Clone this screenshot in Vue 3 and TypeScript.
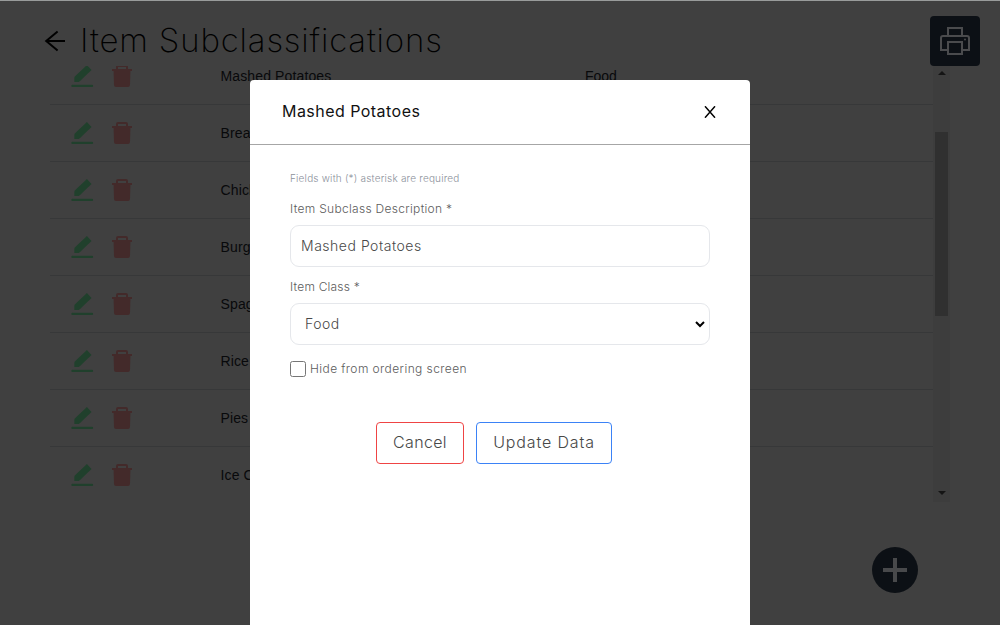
<script setup lang="ts">
import { ref } from 'vue'

interface Row {
  name: string
  itemClass: string
}

const rows: Row[] = [
  'Mashed Potatoes',
  'Breads',
  'Chicken',
  'Burgers',
  'Spaghetti',
  'Rice',
  'Pies',
  'Ice Cream',
].map((name) => ({ name, itemClass: 'Food' }))

const description = ref('Mashed Potatoes')
const itemClass = ref('Food')
const hidden = ref(false)
</script>

<template>
  <div class="page">
    <header class="header">
      <svg class="back" width="22" height="22" viewBox="0 0 22 22">
        <path d="M21 11H2M13.6 1.5L2.2 11l11.4 9.5" fill="none" stroke="#000" stroke-width="2" />
      </svg>
      <h1>Item Subclassifications</h1>
      <button class="print" aria-label="Print">
        <svg width="32" height="32" viewBox="0 0 32 32" fill="none" stroke="#4a4b4d" stroke-width="2">
          <path d="M9 10V3h14v7M9 25H2V13q0-2 2-2h24q2 0 2 2v12h-7" />
          <path d="M9 17h14v12H9z" />
          <circle cx="26" cy="14.5" r="1" fill="#4a4b4d" stroke="none" />
        </svg>
      </button>
    </header>

    <main class="list">
      <div class="rows">
        <div v-for="row in rows" :key="row.name" class="row">
          <svg class="pen" width="24" height="24" viewBox="0 0 24 24" fill="#20402c">
            <path d="M16.9 1.1l4.6 4.8L9.8 17.2 8.5 18H4.300v-4.3l.8-1.500z" />
            <rect x="1.3" y="20.700" width="21.800" height="2.200" rx="1" />
          </svg>
          <svg class="trash" width="20" height="24" viewBox="0 0 20 24" fill="#432a2a">
            <path d="M4 5V3q0-2 2-2h8q2 0 2 2v2h4v2h-1.600L18 21q-.1 2-2 2H4q-1.900 0-2-2L1.600 7H0V5zm2 0h8V3H6z" fill-rule="evenodd" />
          </svg>
          <span class="name">{{ row.name }}</span>
          <span class="class">{{ row.itemClass }}</span>
        </div>
      </div>
      <div class="scrollbar">
        <i class="up"></i>
        <i class="thumb"></i>
        <i class="down"></i>
      </div>
    </main>

    <button class="add" aria-label="Add">
      <svg width="24" height="24" viewBox="0 0 24 24">
        <path d="M12 0v24M0 12h24" stroke="#48494b" stroke-width="4" />
      </svg>
    </button>

    <section class="modal">
      <div class="modal-head">
        <h2>Mashed Potatoes</h2>
        <button class="close" aria-label="Close">
          <svg width="12" height="12" viewBox="0 0 12 12">
            <path d="M1 .3l10 11.4M11 .3L1 11.7" stroke="#000" stroke-width="1.5" />
          </svg>
        </button>
      </div>
      <form class="form" @submit.prevent>
        <p class="hint">Fields with (*) asterisk are required</p>
        <label class="l1" for="desc">Item Subclass Description *</label>
        <input id="desc" v-model="description" class="field" type="text" />
        <label class="l2" for="cls">Item Class *</label>
        <div class="select-wrap">
          <select id="cls" v-model="itemClass" class="field select">
            <option>Food</option>
          </select>
          <svg class="chevron" width="10" height="7" viewBox="0 0 10 7">
            <path d="M1 1l4 4 4-4" fill="none" stroke="#000" stroke-width="2" />
          </svg>
        </div>
        <label class="check"><input v-model="hidden" type="checkbox" /><span>Hide from ordering screen</span></label>
        <div class="actions">
          <button class="btn cancel">Cancel</button>
          <button class="btn update">Update Data</button>
        </div>
      </form>
    </section>
  </div>
</template>

<style>
body {
  margin: 0;
  overflow: hidden;
}
</style>

<style scoped>
* {
  box-sizing: border-box;
}
.page {
  position: relative;
  width: 1000px;
  height: 625px;
  overflow: hidden;
  background: #404040;
  border-top: 1px solid #999c9b;
  font-family: Inter, 'Open Sans', sans-serif;
}
button {
  font-family: inherit;
  padding: 0;
  border: 0;
  cursor: pointer;
}
.header {
  height: 65px;
  display: flex;
  align-items: flex-start;
  padding: 15px 20px 0 44px;
}
.back {
  margin-top: 14px;
}
h1 {
  margin: 3px 0 0 14px;
  font-size: 33px;
  line-height: 42px;
  font-weight: 200;
  letter-spacing: 0.82px;
  white-space: nowrap;
  color: #000;
}
.print {
  width: 50px;
  height: 50px;
  margin-left: auto;
  border-radius: 4px;
  background: #0c1015;
  display: flex;
  align-items: center;
  justify-content: center;
}
.list {
  display: flex;
  height: 436px;
  margin: 0 50px;
  overflow: hidden;
}
.rows {
  flex: 1;
  margin-top: -18px;
}
.row {
  height: 57px;
  border-bottom: 1px solid #373839;
  display: flex;
  align-items: center;
  font: 14px 'Liberation Sans', Arial, sans-serif;
  color: #08090b;
}
.row:last-child {
  border-color: transparent;
}
.pen {
  margin-left: 20px;
}
.trash {
  margin-left: 18px;
}
.name {
  margin-left: 88.5px;
  width: 364.5px;
  letter-spacing: 0.13px;
}
.scrollbar {
  width: 17px;
  background: #3d3d3d;
  display: flex;
  flex-direction: column;
  align-items: flex-start;
}
.up,
.down {
  border: 4px solid transparent;
  border-top-width: 0;
  border-bottom: 4px solid #141414;
  margin: 5px 0 0 4.5px;
}
.down {
  border-top: 4px solid #141414;
  border-bottom-width: 0;
  margin-top: 175px;
}
.thumb {
  width: 13px;
  height: 184px;
  margin: 57px 0 0 2px;
  background: #303030;
}
.add {
  position: absolute;
  left: 872px;
  top: 546px;
  width: 46px;
  height: 46px;
  border-radius: 50%;
  background: #0c1015;
  display: flex;
  align-items: center;
  justify-content: center;
}
.modal {
  position: absolute;
  left: 250px;
  top: 79px;
  width: 500px;
  height: 560px;
  background: #fff;
  border-radius: 4px;
}
.modal-head {
  height: 65px;
  border-bottom: 1px solid #a6a6a6;
  display: flex;
  align-items: center;
  justify-content: space-between;
  padding: 0 34px 0 32px;
}
h2 {
  margin: 0 0 2px;
  font-size: 16px;
  font-weight: 400;
  letter-spacing: 0.46px;
  color: #111;
}
.close {
  background: none;
  display: flex;
}
.form {
  padding: 25px 40px 0;
  display: flex;
  flex-direction: column;
  color: #5c5c5c;
  font-weight: 300;
}
.hint {
  margin: 0;
  height: 16px;
  font-size: 10px;
  line-height: 16px;
  letter-spacing: 0.2px;
  color: #8b909a;
}
.l1,
.l2 {
  height: 20px;
  line-height: 20px;
  font-size: 12px;
  letter-spacing: 0.3px;
}
.l1 {
  margin: 13px 0 6px;
}
.l2 {
  margin: 10px 0 6px;
  letter-spacing: 0.2px;
}
.field {
  display: block;
  height: 42px;
  width: 420px;
  margin: 0;
  padding: 0 10px 2px;
  border: 1px solid #e5e7eb;
  border-radius: 9px;
  background: #fff;
  font: 300 14px Inter, sans-serif;
  letter-spacing: 0.52px;
  color: #484848;
  outline: 0;
}
.select-wrap {
  position: relative;
}
.select {
  appearance: none;
  padding: 0 24px 2px 14px;
}
.chevron {
  position: absolute;
  right: 5px;
  top: 18px;
  pointer-events: none;
}
.check {
  display: flex;
  align-items: center;
  height: 18px;
  margin-top: 15px;
  font-size: 12px;
  letter-spacing: 0.41px;
}
.check input {
  width: 16px;
  height: 16px;
  margin: 0 4px 0 0;
}
.check span {
  margin-bottom: 2px;
}
.actions {
  display: flex;
  gap: 12px;
  margin: 44px 0 0 86px;
}
.btn {
  height: 42px;
  padding-bottom: 2px;
  border: 1px solid #ef4444;
  border-radius: 4px;
  background: #fff;
  font-size: 16px;
  font-weight: 300;
  color: #484848;
}
.cancel {
  width: 88px;
  letter-spacing: 0.35px;
}
.update {
  width: 136px;
  border-color: #3b82f6;
  letter-spacing: 0.85px;
}
</style>
